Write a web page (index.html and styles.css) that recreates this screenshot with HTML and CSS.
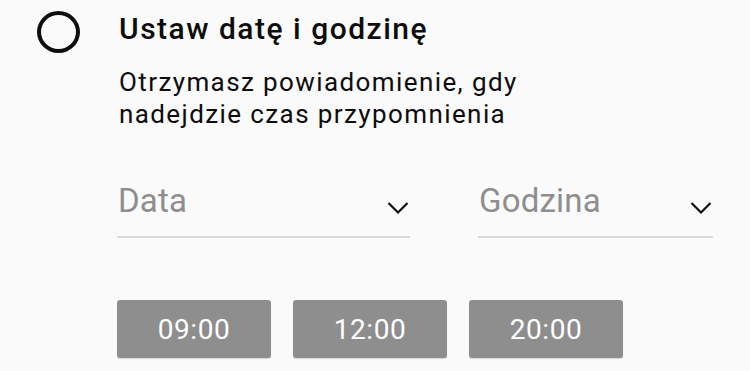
FILE: index.html
```html
<!DOCTYPE html>
<html lang="pl">
<head>
<meta charset="utf-8">
<link rel="stylesheet" href="styles.css">
</head>
<body>
<div class="row">
  <div class="radio-col">
    <span class="radio"></span>
  </div>
  <div class="content">
    <div class="title">Ustaw datę i godzinę</div>
    <div class="subtitle">Otrzymasz powiadomienie, gdy nadejdzie czas przypomnienia</div>
    <div class="fields">
      <div class="field field-date">
        <span class="placeholder">Data</span>
        <svg class="chev" width="22" height="14" viewBox="0 0 22 14"><path d="M1.5 2 L11 11.5 L20.5 2" fill="none" stroke="#111" stroke-width="2.2"/></svg>
      </div>
      <div class="field field-time">
        <span class="placeholder">Godzina</span>
        <svg class="chev" width="22" height="14" viewBox="0 0 22 14"><path d="M1.5 2 L11 11.5 L20.5 2" fill="none" stroke="#111" stroke-width="2.2"/></svg>
      </div>
    </div>
    <div class="buttons">
      <div class="btn">09:00</div>
      <div class="btn">12:00</div>
      <div class="btn">20:00</div>
    </div>
  </div>
</div>
</body>
</html>
```
FILE: styles.css
```css
html, body {
  margin: 0;
  padding: 0;
  background: #fafafa;
}
body {
  font-family: Roboto, "Liberation Sans", sans-serif;
  color: #0d0d0d;
  width: 750px;
  height: 371px;
  overflow: hidden;
}
.row {
  display: flex;
  padding-top: 9px;
}
.radio-col {
  width: 119px;
  flex: none;
}
.radio {
  box-sizing: border-box;
  display: block;
  width: 43px;
  height: 42px;
  margin-left: 37px;
  margin-top: 2px;
  border: 4px solid #0d0d0d;
  border-radius: 50%;
}
.content {
  flex: 1;
}
.title {
  font-size: 30px;
  font-weight: 500;
  line-height: 40px;
  letter-spacing: 1.5px;
}
.subtitle {
  margin-top: 17px;
  font-size: 26px;
  line-height: 32px;
  max-width: 470px;
  letter-spacing: 1.4px;
}
.fields {
  display: flex;
  gap: 68px;
  margin-top: 51px;
  margin-left: -2px;
}
.field {
  display: flex;
  align-items: flex-start;
  justify-content: space-between;
  border-bottom: 2px solid #dadada;
  padding-bottom: 15px;
  padding-left: 1px;
  padding-right: 1px;
}
.field-date { width: 291px; }
.field-time { width: 233px; }
.placeholder {
  font-size: 33px;
  line-height: 40px;
  color: #8e8e8e;
  letter-spacing: 0.2px;
}
.chev {
  display: block;
  margin-top: 20px;
}
.buttons {
  display: flex;
  gap: 22px;
  margin-top: 62px;
  margin-left: -2px;
}
.btn {
  width: 154px;
  height: 58px;
  background: #8e8e8e;
  border-radius: 3px;
  color: #fff;
  font-size: 28px;
  letter-spacing: 0.6px;
  display: flex;
  align-items: center;
  justify-content: center;
  box-shadow: 0 1px 1px rgba(0,0,0,0.15);
}
```
